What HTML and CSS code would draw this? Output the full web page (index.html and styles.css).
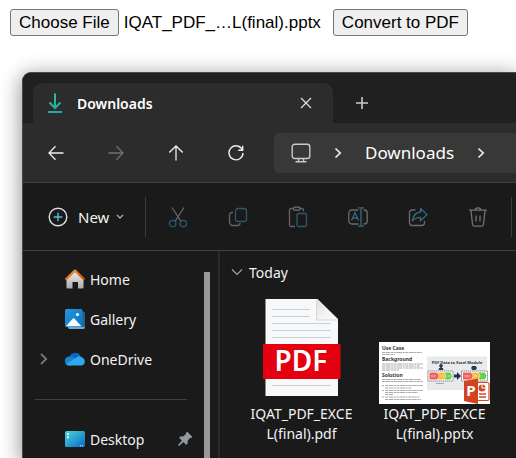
FILE: index.html
```html
<!DOCTYPE html>
<html lang="en">
<head>
<meta charset="utf-8">
<meta name="viewport" content="width=device-width, initial-scale=1">
<title>Convert to PDF</title>
<link rel="stylesheet" href="styles.css">
</head>
<body>
<form class="convert">
  <button type="button" class="convert-button">Choose File</button>
  <output class="convert-file">IQAT_PDF_…L(final).pptx</output>
  <button type="button" class="convert-button">Convert to PDF</button>
</form>

<main class="window">
  <header class="tabs">
    <div class="tab">
      <svg class="tab-icon" width="16" height="20" viewBox="0 0 16 20" fill="none" stroke-width="2">
        <defs><linearGradient id="dl" gradientUnits="userSpaceOnUse" x1="2" y1="0" x2="12" y2="20"><stop offset="0" stop-color="#35c08c"/><stop offset="1" stop-color="#1fa5ae"/></linearGradient></defs>
        <path d="M8 .5V15M2.500 9.500 8 15l5.500-5.500M1 19h14" stroke="url(#dl)"/>
      </svg>
      <span class="tab-title">Downloads</span>
      <button type="button" class="tab-button" aria-label="Close tab"><svg width="12" height="12" viewBox="0 0 12 12" fill="none" stroke="#ddd" stroke-width="1.300"><path d="m1 1 10 10M11 1 1 11"/></svg></button>
    </div>
    <button type="button" class="tab-button tab-add" aria-label="New tab"><svg width="14" height="14" viewBox="0 0 14 14" fill="none" stroke="#ccc" stroke-width="1.600"><path d="M7 1v12M1 7h12"/></svg></button>
  </header>

  <nav class="nav" aria-label="Navigation">
    <button type="button" class="cell" aria-label="Back"><svg width="16" height="16" viewBox="0 0 16 16" fill="none" stroke="#eee" stroke-width="1.300"><path d="M15.500 8H1M7.500 1.300 1 8l6.500 6.700"/></svg></button>
    <button type="button" class="cell" aria-label="Forward"><svg width="16" height="16" viewBox="0 0 16 16" fill="none" stroke="#707070" stroke-width="1.300"><path d="M.5 8H15M8.500 1.300 15 8l-6.500 6.700"/></svg></button>
    <button type="button" class="cell" aria-label="Up"><svg width="16" height="16" viewBox="0 0 16 16" fill="none" stroke="#eee" stroke-width="1.300"><path d="M8 15.500V1M1.300 7.500 8 1l6.700 6.500"/></svg></button>
    <button type="button" class="cell" aria-label="Refresh"><svg width="16" height="16" viewBox="0 0 16 16" fill="none" stroke="#eee" stroke-width="1.400"><path d="M14.500 5.200A7 7 0 1 0 15 8M14.700.8v4.500h-4.500"/></svg></button>
    <div class="address">
      <svg class="address-device" width="20" height="20" viewBox="0 0 20 20" fill="none" stroke="#c8c8c8" stroke-width="1.400"><rect x="1.200" y="1.200" width="17.600" height="14.300" rx="2.500"/><path d="M7.500 15.500v3M12.500 15.500v3M4.500 18.700h11"/></svg>
      <svg class="address-arrow" width="8" height="12" viewBox="0 0 8 12" fill="none" stroke="#eee" stroke-width="1.700"><path d="m1.500 1.500 4.700 4.500-4.700 4.500"/></svg>
      <span class="address-text">Downloads</span>
      <svg class="address-arrow" width="8" height="12" viewBox="0 0 8 12" fill="none" stroke="#eee" stroke-width="1.700"><path d="m1.500 1.500 4.700 4.500-4.700 4.500"/></svg>
    </div>
  </nav>

  <div class="toolbar">
    <button type="button" class="new">
      <svg width="20" height="20" viewBox="0 0 20 20" fill="none"><circle cx="10" cy="10" r="8.800" stroke="#ddd" stroke-width="1.400"/><path d="M10 5.700v8.600M5.700 10h8.600" stroke="#5ab9e8" stroke-width="1.400"/></svg>
      <span>New</span>
      <svg width="8" height="6" viewBox="0 0 8 6" fill="none" stroke="#aaa" stroke-width="1.300"><path d="m1 1 3 3 3-3"/></svg>
    </button>
    <span class="divider"></span>
    <div class="tools">
      <button type="button" class="cell" aria-label="Cut"><svg width="20" height="22" viewBox="0 0 20 22" fill="none" stroke-width="1.300"><path d="m4 1.500 8.800 13.700M16 1.500 7.200 15.200" stroke="#646464"/><circle cx="4.700" cy="17.500" r="3.200" stroke="#2b5a70"/><circle cx="15.300" cy="17.500" r="3.200" stroke="#2b5a70"/></svg></button>
      <button type="button" class="cell" aria-label="Copy"><svg width="20" height="20" viewBox="0 0 20 20" fill="none" stroke-width="1.300"><path d="M5 5.500H4A2.500 2.500 0 0 0 1.500 8v7A3.500 3.500 0 0 0 5 18.500h4.500A2.500 2.500 0 0 0 12 16" stroke="#646464"/><rect x="7.500" y="1.500" width="11" height="13" rx="2.500" stroke="#2b5a70"/></svg></button>
      <button type="button" class="cell" aria-label="Paste"><svg width="20" height="22" viewBox="0 0 20 22" fill="none" stroke-width="1.300"><path d="M7 20.500H3A1.500 1.500 0 0 1 1.500 19V4A1.500 1.500 0 0 1 3 2.500h2.500M12 2.500h2A1.500 1.500 0 0 1 15.500 4v1.500" stroke="#646464"/><rect x="5.500" y="1.200" width="6.500" height="3" rx="1.500" stroke="#707070"/><rect x="9" y="7.500" width="9.500" height="13" rx="1.500" stroke="#2b5a70"/></svg></button>
      <button type="button" class="cell" aria-label="Rename"><svg width="20" height="20" viewBox="0 0 20 20" fill="none" stroke-width="1.300"><path d="M10.500 3H3.800A3 3 0 0 0 .8 6v8a3 3 0 0 0 3 3h6.700M15.500 3h.7a3 3 0 0 1 3 3v8a3 3 0 0 1-3 3h-.7" stroke="#6b6b6b"/><path d="m3.500 13.500 3.500-8 3.500 8M4.700 11h4.600M10 .8h6M10 19.200h6M13 .8v18.400" stroke="#356a83"/></svg></button>
      <button type="button" class="cell" aria-label="Share"><svg width="20" height="20" viewBox="0 0 20 20" fill="none" stroke-width="1.300"><path d="M7.500 3H4a2.500 2.500 0 0 0-2.500 2.500v10.300A2.700 2.700 0 0 0 4.200 18.500h9.600a2.700 2.700 0 0 0 2.700-2.700V14" stroke="#6b6b6b"/><path d="M12.500 1.500 19 7.600l-6.500 6.200v-3.400c-3.500 0-5.800 1-8 3.500C5 8.500 7.500 5.500 12.500 5Z" stroke="#356a83" stroke-linejoin="round"/></svg></button>
      <button type="button" class="cell" aria-label="Delete"><svg width="20" height="20" viewBox="0 0 20 20" fill="none" stroke="#727272" stroke-width="1.300"><path d="M1 3.200h18M7.200 3a2.800 2.200 0 0 1 5.600 0M3 3.500l1.500 14a2 2 0 0 0 2 1.700h7a2 2 0 0 0 2-1.700L17 3.500M8 8.500v6M12 8.500v6"/></svg></button>
    </div>
    <span class="divider"></span>
  </div>

  <div class="content">
    <aside class="sidebar">
      <div class="places">
        <a class="place" href="#"><span class="expand"></span>
          <svg class="place-icon" width="20" height="20" viewBox="0 0 20 20"><defs><linearGradient id="house" x2="0" y2="1"><stop stop-color="#eee"/><stop offset="1" stop-color="#aaa"/></linearGradient><linearGradient id="roof" x2="1" y2="1"><stop stop-color="#f6a02c"/><stop offset="1" stop-color="#c94c13"/></linearGradient></defs><path d="M1.500 9 10 2l8.500 7v9.500q0 1-1 1H13V13H7.500v6.500h-5q-1 0-1-1Z" fill="url(#house)"/><path d="M1.200 10 10 1.700 18.800 10" fill="none" stroke="url(#roof)" stroke-width="2.400" stroke-linecap="round" stroke-linejoin="round"/></svg>
          <span class="place-name">Home</span></a>
        <a class="place" href="#"><span class="expand"></span>
          <svg class="place-icon" width="20" height="20" viewBox="0 0 20 20"><defs><linearGradient id="sky" x2="1" y2="1"><stop stop-color="#2796dc"/><stop offset="1" stop-color="#0874c4"/></linearGradient></defs><rect x="3" y="2.500" width="17" height="17.500" rx="2" fill="#296187"/><path d="M3 18h17q0 2-2 2H5q-2 0-2-2" fill="#75a9ca"/><rect width="17.500" height="18" rx="1.500" fill="url(#sky)"/><path d="m1 17.300 6.600-7.500q1-1 2 0l6.800 7.500Z" fill="#f5faff"/><circle cx="12.500" cy="5.500" r="1.600" fill="#fff"/></svg>
          <span class="place-name">Gallery</span></a>
        <a class="place" href="#"><span class="expand"><svg width="8" height="12" viewBox="0 0 8 12" fill="none" stroke="#777" stroke-width="1.800"><path d="m1 1 5.200 5L1 11"/></svg></span>
          <svg class="place-icon" width="20" height="14" viewBox="0 0 20 14"><path d="M4.500 5A6 6 0 0 1 15.500 4l-5 6L3 12.500A4 4 0 0 1 4.500 5" fill="#0967bd"/><path d="M4.500 4.500c3.500-.5 5 1.500 8 3L6 13.500H4A4 4 0 0 1 4.500 4.500" fill="#1684d6"/><path d="M11 6c1.500-2 4.500-2.600 6-.5 3.500 1 4 7.500-.5 8H4q-2 0-3-1.500Z" fill="#32a8ec"/></svg>
          <span class="place-name">OneDrive</span></a>
        <hr class="separator">
        <a class="place" href="#"><span class="expand"></span>
          <svg class="place-icon" width="20" height="16" viewBox="0 0 20 16"><defs><linearGradient id="desk" x2="1" y2="1"><stop stop-color="#4cd3df"/><stop offset="1" stop-color="#086bc5"/></linearGradient></defs><rect width="20" height="16" rx="1.500" fill="url(#desk)"/><path d="M2 2h2v2H2zM2 5.300h2v2H2zM15 14.200h1v1h-1zM17 14.200h1v1h-1z" fill="#dff7ff"/></svg>
          <span class="place-name">Desktop</span>
          <svg class="pin" width="14" height="14" viewBox="0 0 14 14" fill="#929aa1"><path d="M8.500 0h1L14 4.500v1l-2.200.8-2 2.200-.3 3L8.300 13 5.500 10 1 14l-1-1 4-4.500-3-2.800 1.500-1.200 3-.3 2.200-2Z"/></svg></a>
      </div>
      <div class="scrollbar"></div>
    </aside>

    <section class="files">
      <h2 class="group"><svg width="12" height="8" viewBox="0 0 12 8" fill="none" stroke="#a0a0a0" stroke-width="1.200"><path d="m1 1.500 5 5 5-5"/></svg>Today</h2>
      <div class="file-grid">
        <a class="file" href="#">
          <span class="preview"><svg class="document" width="78" height="98" viewBox="0 0 78 98">
            <defs><linearGradient id="fold" x2="1" y2="1"><stop stop-color="#ddd"/><stop offset=".6" stop-color="#f6f6f6"/></linearGradient></defs>
            <path d="M2.500 0h52l20.500 20v77H2.500Z" fill="#f7f8fa"/>
            <path d="M53.500 0 75 21H53.500Z" fill="url(#fold)"/><path d="M53.500 1v20H75" fill="none" stroke="#ccc" stroke-width=".7"/>
            <path d="M9.500 10.500H47M9.500 17.500H47M9.500 24.500h58M9.500 31.500h58M9.500 38.500h58M9.500 86.500h58" stroke="#ccced2"/>
            <path d="M0 45h77.500v35H0Z" fill="#e5000f"/>
            <text class="pdf-label" x="38" y="72" text-anchor="middle">PDF</text>
          </svg></span>
          <span class="file-name">IQAT_PDF_EXCE<br>L(final).pdf</span>
        </a>
        <a class="file" href="#">
          <span class="preview"><svg width="111" height="62" viewBox="0 0 111 62">
            <path d="M0 0h111v62H0z" fill="#fff"/>
            <path d="M48 14.500h60V48H48z" fill="#e9eaec"/>
            <g class="slide-title"><text x="3" y="8">Use Case</text><text x="3" y="19">Background</text><text x="3" y="35">Solution</text></g>
            <g stroke="#888" stroke-width=".7" stroke-dasharray="3 .5 5 .6 2 .5"><path d="M3 10.500h40M3 12.500h13M3 22h41M3 24h38M3 26h41M3 28h17M3 37.500h39M3 39.500h41M6 43.500h38M6 46h27M6 48.500h38M6 50.500h33M6 52.500h8M6 55h35M6 57.500h36"/></g>
            <path d="M3.500 43.200h1v1h-1zM3.500 48h1v1h-1zM3.500 54.500h1v1h-1z" fill="#555"/>
            <text class="slide-caption" x="78" y="22" text-anchor="middle">PDF Data to Excel Module</text>
            <path d="M59.500 28q0-2.500 2-2.500a1.800 1.800 0 1 1 1 0q2 0 2 2.500Z M92 26l1.300-2h3.400l1.300 2-1.500 2h-3Z" fill="#253b59"/>
            <g fill="#fff" stroke="#69717d" stroke-width=".8" stroke-dasharray="1.500 .5"><path d="M49 29h25v10H49zM82.500 29h26v10h-26z"/></g>
            <path d="M50.500 30.500H58l2 3.500-2 3.500h-7.500ZM84 30.500h8l2 3.500-2 3.500h-8Z" fill="#ef615d"/>
            <path d="M58.500 30.500H65l2 3.500-2 3.500h-6.500l2-3.500ZM92.500 30.500H99l2 3.500-2 3.500h-6.500l2-3.500Z" fill="#f7bd3c"/>
            <path d="M65.500 30.500h6L73 34l-1.500 3.500h-6l2-3.500ZM99.500 30.500h6.500l1.500 3.500-1.500 3.500h-6.500l2-3.500Z" fill="#67ce4b"/>
            <path d="M52 34h5M61.500 34H65M68.500 34h3M85.500 34H91M95 34h3.500" stroke="#fff" stroke-width="1" opacity=".6"/>
            <path d="M75 32.500h3V30l4 4-4 4v-2.500h-3Z" fill="#20334d"/>
            <path d="M57 41.500h8" stroke="#888" stroke-width=".7"/>
            <path d="M96 40.500h12.500q1.500 0 1.500 1.500v15q0 1.500-1.500 1.500H96Z" fill="#fff" stroke="#d14a27" stroke-width="1.200"/>
            <circle cx="103" cy="46" r="3.500" fill="#d14a27"/><path d="M103 46v-4M103 46h4" stroke="#fff"/><path d="M100 52h7M100 55h7" stroke="#d14a27" stroke-width="1.300"/>
            <path d="m85 39 14-2.500v25.500L85 59Z" fill="#d04421"/>
            <text class="ppt-label" x="92" y="54" text-anchor="middle">P</text>
          </svg></span>
          <span class="file-name">IQAT_PDF_EXCE<br>L(final).pptx</span>
        </a>
      </div>
    </section>
  </div>
</main>
</body>
</html>
```
FILE: styles.css
```css
* { box-sizing: border-box; }

body {
  margin: 0;
  height: 100vh;
  overflow: hidden;
  display: flex;
  flex-direction: column;
  background: #fff;
  font-family: "Noto Sans", "Open Sans", sans-serif;
  color: #f2f2f2;
}

button { font: inherit; color: inherit; cursor: pointer; }
svg { display: block; flex: none; }
a { color: inherit; text-decoration: none; }

.convert {
  flex: none;
  display: flex;
  align-items: center;
  padding: 9px 10px 36px;
  font: 17px/19px "Liberation Sans", Arial, sans-serif;
  color: #000;
}
.convert-button {
  height: 27px;
  padding: 0 8px;
  border: 1px solid #767676;
  border-radius: 3px;
  background: #efefef;
  white-space: nowrap;
}
.convert-file { margin: 0 12px 0 5px; white-space: nowrap; }

.window {
  flex: 1;
  min-height: 0;
  display: flex;
  flex-direction: column;
  margin-left: 22px;
  overflow: hidden;
  border-radius: 9px 0 0 0;
  border-left: 1px solid #484848;
  border-top: 1px solid #484848;
  background: #1a1a1a;
  box-shadow: 0 4px 20px 2px rgb(0 0 0 / 40%);
}

.tabs {
  flex: none;
  display: flex;
  height: 50px;
  padding: 10px 0 0 10px;
  background: #202020;
}
.tab {
  display: flex;
  align-items: center;
  width: 300px;
  padding: 0 12px 0 14px;
  border-radius: 9px 9px 0 0;
  background: #2c2c2c;
}
.tab-title { flex: 1; margin-left: 14px; font-size: 14px; font-weight: 600; color: #fff; }
.tab-button {
  display: grid;
  place-items: center;
  width: 30px;
  padding: 0;
  border: 0;
  background: none;
}
.tab-add { margin-left: 14px; }

.nav {
  flex: none;
  display: flex;
  align-items: center;
  height: 60px;
  padding-left: 3px;
  background: #2c2c2c;
  border-bottom: 1px solid #404040;
}
.cell {
  display: grid;
  place-items: center;
  flex: none;
  width: 60px;
  height: 40px;
  padding: 0;
  border: 0;
  background: none;
}
.address {
  flex: 1;
  display: flex;
  align-items: center;
  height: 40px;
  margin-left: 8px;
  padding-left: 17px;
  border-radius: 6px 0 0 6px;
  background: #383838;
}
.address-arrow { margin: 0 23px; }
.address-text { font-size: 17px; color: #fff; }

.toolbar {
  flex: none;
  display: flex;
  align-items: center;
  height: 68px;
  padding-left: 25px;
  border-bottom: 1px solid #404040;
}
.new {
  display: flex;
  align-items: center;
  gap: 7px;
  width: 97px;
  padding: 0;
  border: 0;
  background: none;
  font-size: 15px;
}
.new span { margin-left: 3px; }
.divider { flex: none; width: 1px; height: 40px; background: #3a3a3a; }
.tools { display: flex; margin: 0 3px 0 2px; }

.content { flex: 1; min-height: 0; display: flex; font-size: 14px; }
.sidebar {
  flex: none;
  display: flex;
  width: 197px;
  padding-right: 8px;
  border-right: 2px solid #292929;
}
.places { flex: 1; padding-top: 8px; }
.place { display: flex; align-items: center; height: 40px; padding-right: 12px; }
.expand { display: grid; place-items: center; width: 42px; }
.place-name { flex: 1; margin-left: 5px; }
.separator { height: 1px; margin: 20px 17px 19px 12px; border: 0; background: #404040; }
.scrollbar { width: 6px; margin-top: 21px; background: #999; }

.files { flex: 1; min-width: 0; }
.group {
  display: flex;
  align-items: center;
  gap: 6px;
  height: 42px;
  margin: 0;
  padding-left: 11px;
  font-size: 14px;
  font-weight: 400;
}
.file-grid { display: grid; grid-template-columns: repeat(auto-fill, 133px); padding-left: 15px; }
.file { display: flex; flex-direction: column; align-items: center; }
.preview { display: flex; align-items: flex-end; height: 111px; }
.document { margin-bottom: 7px; }
.file-name { line-height: 20px; text-align: center; }
.pdf-label { font: 600 28px "Noto Sans", sans-serif; fill: #fff; }
.slide-title { font: 700 5px "Noto Sans", sans-serif; fill: #333; }
.slide-caption { font: 700 4px "Noto Sans", sans-serif; fill: #333; }
.ppt-label { font: 700 15px "Noto Sans", sans-serif; fill: #fff; }
```
